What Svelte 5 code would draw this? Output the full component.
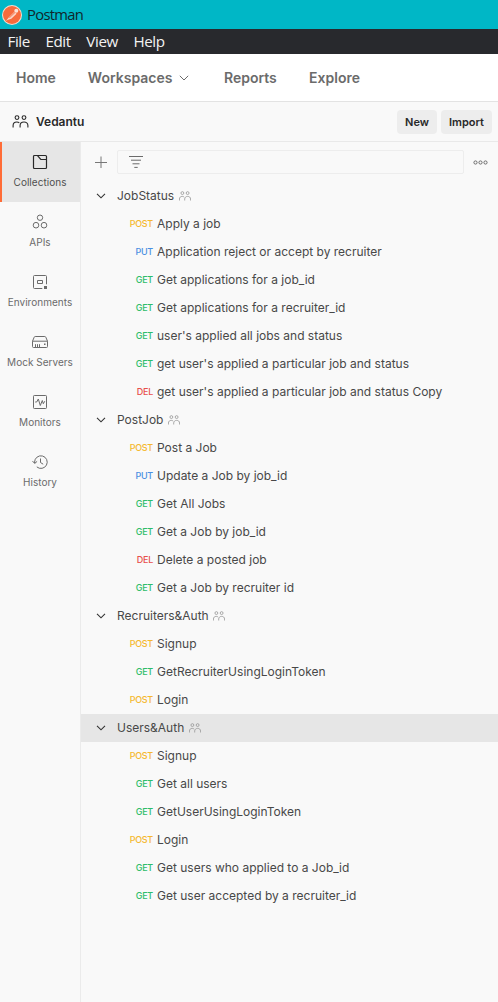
<script>
  const tools = ['Collections', 'APIs', 'Environments', 'Mock Servers', 'Monitors', 'History'];
  const groups = [
    { name: 'JobStatus', items: [
      ['POST', 'Apply a job'],
      ['PUT', 'Application reject or accept by recruiter'],
      ['GET', 'Get applications for a job_id'],
      ['GET', 'Get applications for a recruiter_id'],
      ['GET', "user's applied all jobs and status"],
      ['GET', "get user's applied a particular job and status"],
      ['DEL', "get user's applied a particular job and status Copy"]
    ] },
    { name: 'PostJob', items: [
      ['POST', 'Post a Job'],
      ['PUT', 'Update a Job by job_id'],
      ['GET', 'Get All Jobs'],
      ['GET', 'Get a Job by job_id'],
      ['DEL', 'Delete a posted job'],
      ['GET', 'Get a Job by recruiter id']
    ] },
    { name: 'Recruiters&Auth', items: [
      ['POST', 'Signup'],
      ['GET', 'GetRecruiterUsingLoginToken'],
      ['POST', 'Login']
    ] },
    { name: 'Users&Auth', selected: true, items: [
      ['POST', 'Signup'],
      ['GET', 'Get all users'],
      ['GET', 'GetUserUsingLoginToken'],
      ['POST', 'Login'],
      ['GET', 'Get users who applied to a Job_id'],
      ['GET', 'Get user accepted by a recruiter_id']
    ] }
  ];
</script>

{#snippet people(w, h, sw)}
  <svg class="people" width={w} height={h} viewBox="0 0 16 13" fill="none" stroke="currentColor" stroke-width={sw}>
    <circle cx="4.5" cy="2.6" r="1.9" /><circle cx="11.5" cy="2.6" r="1.9" />
    <path d="M.6 12.5v-2C.6 8.2 2.2 7 4.3 7c1 0 1.9.3 2.5.9M7.6 12.5v-2C7.6 8.2 9.4 7 11.5 7s3.9 1.2 3.9 3.5v2" />
  </svg>
{/snippet}

<div class="app">
  <div class="title">
    <svg width="20" height="20" viewBox="0 0 20 20">
      <circle cx="10" cy="10" r="10" fill="#f7dfd0" />
      <circle cx="10" cy="10" r="9" fill="#f76b3c" />
      <path d="M3.7 16.2l3.2-4 5.5-5.5 2.2 2-5.3 5.1-3.8 1.2z" fill="#fbd7c8" />
      <path d="M6.8 12.7l6-6 .8.9-5.8 5.5z" fill="#f58a66" />
      <circle cx="14.3" cy="5.8" r="2" fill="#fce4d8" />
    </svg>
    <span>Postman</span>
  </div>
  <div class="menu"><span>File</span><span>Edit</span><span>View</span><span>Help</span></div>
  <nav>
    <span class="home">Home</span>
    <span class="work">Workspaces</span>
    <svg width="10" height="6" viewBox="0 0 10 6" fill="none" stroke="#6b6b6b"><path d="M.8.8L5 5 9.2.8" /></svg>
    <span class="reports">Reports</span>
    <span class="explore">Explore</span>
  </nav>
  <div class="workspace">
    {@render people(17, 13, 1.1)}
    <b>Vedantu</b>
    <button class="new">New</button><button class="import">Import</button>
  </div>
  <div class="body">
    <aside>
      {#each tools as tool, i}
        <div class="tool" class:active={i === 0}>
          <svg width="16" height="16" viewBox="0 0 16 16" fill="none" stroke="currentColor">
            {#if i === 0}
              <path d="M2.5 1.5h11a1 1 0 0 1 1 1v11a1 1 0 0 1-1 1h-11a1 1 0 0 1-1-1v-11a1 1 0 0 1 1-1zM5.5 1.7l3.3 3.8h5.7" stroke-width="1.2" />
            {:else if i === 1}
              <circle cx="8" cy="3.7" r="2.7" /><circle cx="4" cy="11.2" r="2.8" /><circle cx="12" cy="11.2" r="2.8" />
            {:else if i === 2}
              <path d="M10.3 14.5H2.5a1 1 0 0 1-1-1v-11a1 1 0 0 1 1-1h11a1 1 0 0 1 1 1v7.8M5.5 6.5h5v3h-5z" />
              <path d="M12 12h3v3h-3z" fill="currentColor" stroke="none" />
            {:else if i === 3}
              <path d="M.5 7.2v5.3a1 1 0 0 0 1 1h13a1 1 0 0 0 1-1V7.2zM.5 7.2L2.2 3.2q.3-.7 1-.7h9.6q.7 0 1 .7l1.7 4M3.5 13v-2.8M5.5 13v-2.8M7.5 13v-2.8" />
              <path d="M12 9.5h1.5V11H12z" fill="currentColor" stroke="none" />
            {:else if i === 4}
              <rect x="1.5" y="1.5" width="13" height="13" rx=".8" />
              <path d="M3.2 8h1.5l1.6-3 2 6.5 2-5 1 3.2 1.5-2.5" />
            {:else}
              <path d="M2.6 9.2V8a6.3 6.3 0 1 1 2.2 4.9M.5 7.1l2.2 2.3 2.4-2M8.5 4.5v4l2.7 1.7" />
            {/if}
          </svg>
          <span>{tool}</span>
        </div>
      {/each}
    </aside>
    <main>
      <div class="search">
        <svg width="12" height="12" viewBox="0 0 12 12" stroke="#777"><path d="M0 6.5h12M6 .5v12" /></svg>
        <div class="field">
          <svg width="14" height="12" viewBox="0 0 14 12" stroke="#6b6b6b"><path d="M0 .5h14M2 4.2h10M3.5 7.8h7M5.3 11.4h3.4" /></svg>
        </div>
        <svg class="more" width="15" height="5" viewBox="0 0 15 5" fill="none" stroke="#6b6b6b"><circle cx="2.5" cy="2.5" r="1.6" /><circle cx="7.5" cy="2.5" r="1.6" /><circle cx="12.5" cy="2.5" r="1.6" /></svg>
      </div>
      {#each groups as group}
        <div class="group" class:selected={group.selected}>
          <svg width="10" height="6" viewBox="0 0 10 6" fill="none" stroke="#333" stroke-width="1.1"><path d="M1 .8l4 4 4-4" /></svg>
          <span>{group.name}</span>
          {@render people(12, 10, 1.1)}
        </div>
        {#each group.items as [method, name]}
          <div class="row"><span class="method {method.toLowerCase()}">{method}</span><span>{name}</span></div>
        {/each}
      {/each}
    </main>
  </div>
</div>

<style>
  :global(body) { margin: 0; }
  .app { width: 498px; height: 1002px; display: flex; flex-direction: column; background: #f9f9f9; color: #484848; font-family: Inter, sans-serif; overflow: hidden; white-space: nowrap; }
  svg { flex: none; display: block; }
  .title { height: 29px; box-sizing: border-box; padding: 0 2px; display: flex; align-items: center; gap: 5px; background: #00b7c6; color: #10272b; font: 14.8px/29px "Open Sans", sans-serif; letter-spacing: -.7px; }
  .menu { height: 25px; padding-left: 7.5px; display: flex; gap: 15.5px; background: #28292d; color: #f2f2f2; font: 15.2px/25px "Open Sans", sans-serif; letter-spacing: -.4px; }
  nav { height: 47px; padding-left: 16px; display: flex; align-items: center; background: #fff; border-bottom: 1px solid #e3e3e3; color: #6b6b6b; font-size: 14px; font-weight: 600; }
  .work { margin-left: 32px; }
  nav svg { margin-left: 7px; }
  .reports { margin-left: 34.5px; }
  .explore { margin-left: 32.3px; }
  .workspace { height: 39px; padding: 0 6px 0 12px; display: flex; align-items: center; border-bottom: 1px solid #e9e9e9; color: #292929; }
  .workspace b { flex: 1; margin-left: 7px; font-size: 12px; font-weight: 600; }
  button { height: 24px; padding: 0; border: 0; border-radius: 4px; background: #ededed; color: #292929; font: 600 11px Inter, sans-serif; }
  .new { width: 40px; }
  .import { width: 51px; margin-left: 4px; }
  .body { flex: 1; display: flex; }
  aside { width: 80px; border-right: 1px solid #ebebeb; color: #6b6b6b; }
  .tool { height: 60px; box-sizing: border-box; padding-top: 12px; display: flex; flex-direction: column; align-items: center; font-size: 10px; line-height: 14px; letter-spacing: .03px; }
  .tool span { margin-top: 5px; }
  .active { background: linear-gradient(90deg, #ff6c37 2px, #e6e6e6 2px); color: #292929; }
  .active span { color: #505050; }
  main { flex: 1; min-width: 0; }
  .search { height: 40px; padding: 0 10px 0 14px; display: flex; align-items: center; }
  .field { flex: 1; height: 22px; margin: 0 9px 0 10px; padding-left: 11px; display: flex; align-items: center; border: 1px solid #ededed; border-radius: 2px; }
  .group { height: 28px; padding-left: 15px; display: flex; align-items: center; font-size: 12px; }
  .group span { margin-left: 11px; padding-bottom: 1px; }
  .group .people { margin-left: 4.5px; color: #999; }
  .selected { background: #e6e6e6; }
  .row { height: 28px; box-sizing: border-box; padding-bottom: 1px; display: flex; align-items: center; font-size: 12px; }
  .method { width: 72px; margin-right: 4px; text-align: right; font-size: 9px; letter-spacing: -.25px; font-weight: 500; }
  .post { color: #f5b82e; }
  .put { color: #4a90e2; }
  .get { color: #2fbd6b; }
  .del { color: #e8504c; }
</style>
